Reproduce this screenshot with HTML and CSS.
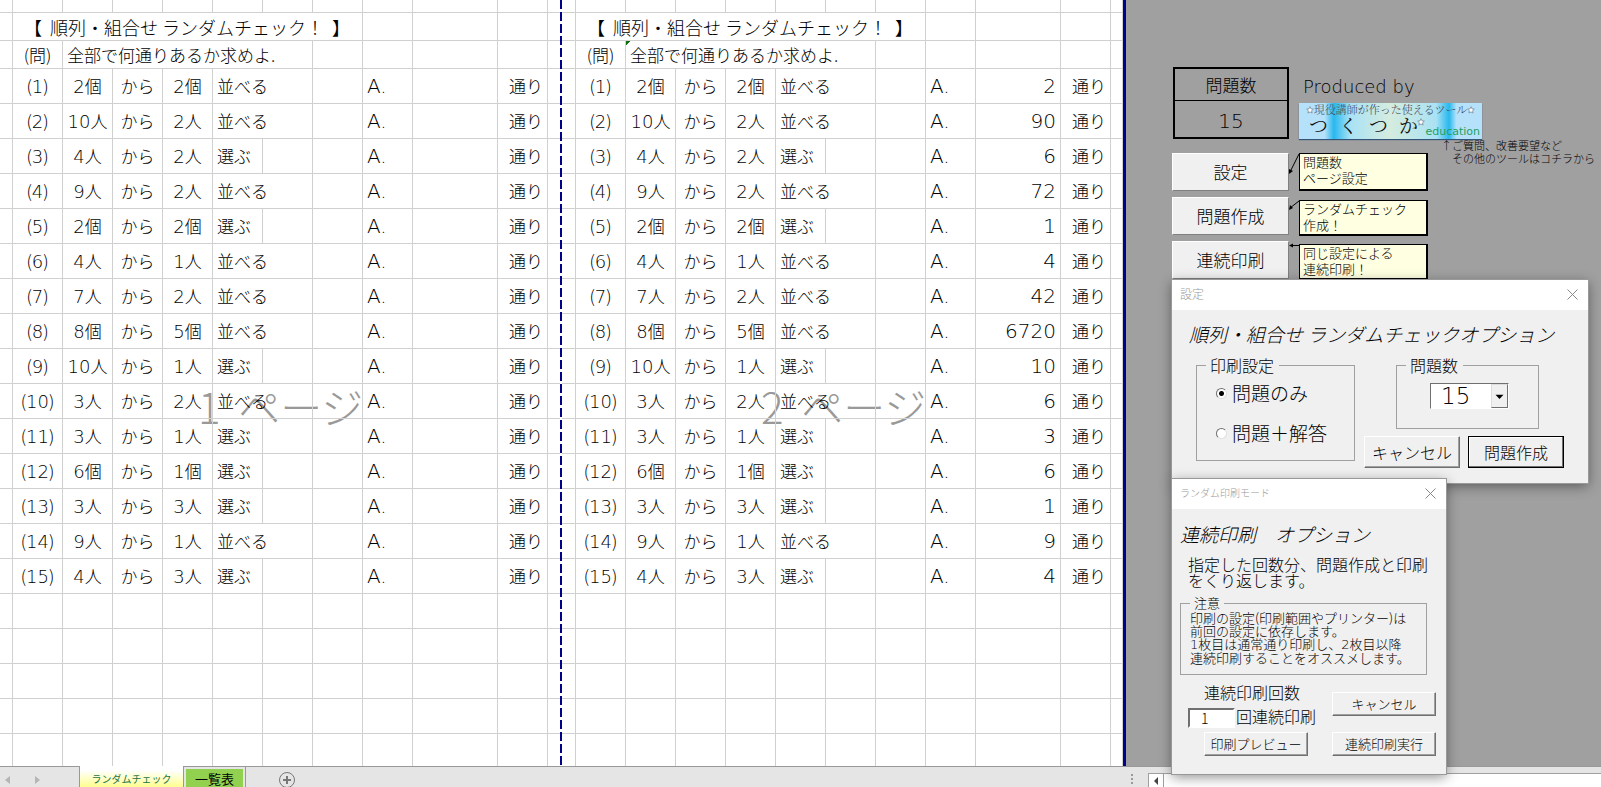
FILE: index.html
```html
<!DOCTYPE html>
<html lang="ja">
<head>
<meta charset="utf-8">
<title>順列・組合せ ランダムチェック</title>
<link rel="stylesheet" href="styles.css">
</head>
<body>
<main class="workspace">
  <section class="sheet">
    <div class="watermark watermark-1">1 &thinsp;ページ</div>
    <div class="watermark watermark-2">2 &thinsp;ページ</div>
    <table class="grid">
      <colgroup id="cols"></colgroup>
      <tbody id="rows"></tbody>
    </table>
    <div class="page-break"></div>
  </section>

  <aside class="side">
    <div class="side-top">
      <table class="count">
        <tr><th scope="col">問題数</th></tr>
        <tr><td class="num">15</td></tr>
      </table>
      <div class="brand">
        <div class="produced num">Produced by</div>
        <a class="banner" href="#">
          <span class="banner-top"><svg class="star" viewBox="0 0 12 12"><path d="M6 1l1.500 3.300 3.500.4-2.600 2.400.7 3.500L6 8.900 2.900 10.600l.7-3.500L1 4.700l3.500-.4z"/></svg>現役講師が作った使えるツール<svg class="star" viewBox="0 0 12 12"><path d="M6 1l1.500 3.300 3.500.4-2.600 2.400.7 3.500L6 8.900 2.900 10.600l.7-3.500L1 4.700l3.500-.4z"/></svg></span>
          <span class="banner-main"><b>つ</b><b>く</b><b>つ</b><b>か</b></span>
          <svg class="star star-big" viewBox="0 0 12 12"><path d="M6 1l1.500 3.300 3.500.4-2.600 2.400.7 3.500L6 8.900 2.900 10.600l.7-3.500L1 4.700l3.500-.4z"/></svg>
          <span class="banner-edu">education</span>
        </a>
      </div>
    </div>
    <div class="side-bottom">
      <div class="tools">
        <div class="tool"><button class="tool-btn">設定</button>
          <svg class="pointer" viewBox="0 0 10 38"><path class="line" d="M10 1L1 19"/><path d="M0 21l0-5 4 2z"/></svg>
          <p class="memo">問題数<br>ページ設定</p></div>
        <div class="tool"><button class="tool-btn">問題作成</button>
          <svg class="pointer" viewBox="0 0 10 38"><path class="line" d="M10 4L1 11"/><path d="M0 13l1-5 3 3z"/></svg>
          <p class="memo memo-low">ランダムチェック<br>作成！</p></div>
        <div class="tool"><button class="tool-btn">連続印刷</button>
          <svg class="pointer" viewBox="0 0 10 38"><path class="line" d="M10 4.500H1"/><path d="M0 4.500l4-2v4z"/></svg>
          <p class="memo memo-low">同じ設定による<br>連続印刷！</p></div>
      </div>
      <p class="side-note">↑ご質問、改善要望など<br>　その他のツールはコチラから</p>
    </div>
  </aside>

  <form class="dialog dialog-settings">
    <header class="dialog-bar"><span>設定</span>
      <button type="button" class="close" aria-label="閉じる"><svg viewBox="0 0 11 11"><path d="M.5.5l10 10M10.500.5l-10 10"/></svg></button></header>
    <div class="dialog-body">
      <h2>順列・組合せ ランダムチェックオプション</h2>
      <div class="settings">
        <fieldset class="print-set">
          <legend>印刷設定</legend>
          <label><input type="radio" name="mode" checked>問題のみ</label>
          <label><input type="radio" name="mode">問題＋解答</label>
        </fieldset>
        <div class="settings-right">
          <fieldset class="count-set">
            <legend>問題数</legend>
            <span class="select-box"><select class="num" aria-label="問題数"><option>15</option></select><svg viewBox="0 0 17 23"><path d="M4 10h9l-4.500 5z"/></svg></span>
          </fieldset>
          <div class="actions">
            <button type="button" class="btn btn-big">キャンセル</button>
            <button type="button" class="btn btn-big btn-default">問題作成</button>
          </div>
        </div>
      </div>
    </div>
  </form>

  <form class="dialog dialog-print">
    <header class="dialog-bar"><span class="small">ランダム印刷モード</span>
      <button type="button" class="close" aria-label="閉じる"><svg viewBox="0 0 11 11"><path d="M.5.5l10 10M10.500.5l-10 10"/></svg></button></header>
    <div class="dialog-body">
      <h2>連続印刷　オプション</h2>
      <p class="lead">指定した回数分、問題作成と印刷<br>をくり返します。</p>
      <fieldset class="notice">
        <legend>注意</legend>
        <p>印刷の設定(印刷範囲やプリンター)は<br>前回の設定に依存します。<br><span class="num">1</span>枚目は通常通り印刷し、<span class="num">2</span>枚目以降<br>連続印刷することをオススメします。</p>
      </fieldset>
      <div class="print-rows">
        <div class="print-left">
          <label class="times-label" for="times">連続印刷回数</label>
          <div class="times"><input id="times" type="text" value="1">回連続印刷</div>
          <button type="button" class="btn preview">印刷プレビュー</button>
        </div>
        <div class="print-right">
          <button type="button" class="btn">キャンセル</button>
          <button type="button" class="btn">連続印刷実行</button>
        </div>
      </div>
    </div>
  </form>
</main>

<footer class="bar">
  <div class="bar-nav">
    <svg viewBox="0 0 80 20"><path d="M10 9v8l-5-4zM35 9v8l5-4z"/></svg>
  </div>
  <a class="tab tab-active" href="#">ランダムチェック</a>
  <a class="tab tab-list" href="#"><span>一覧表</span></a>
  <button class="add" aria-label="シートを追加"><svg viewBox="0 0 18 18"><circle cx="9" cy="9" r="7.500"/><path class="plus" d="M9 5v8M5 9h8"/></svg></button>
  <div class="bar-scroll">
    <svg class="dots" viewBox="0 0 3 13"><path d="M0 1h2v2H0zM0 5h2v2H0zM0 9h2v2H0z"/></svg>
    <button class="scroll-left" aria-label="左へ"><svg viewBox="0 0 14 13"><path d="M9 3v8L5 7z"/></svg></button>
    <div class="scroll-track"></div>
  </div>
</footer>
<script src="sheet.js"></script>
</body>
</html>
```
FILE: styles.css
```css
* { box-sizing: border-box; }
body {
  margin: 0;
  height: 100vh;
  display: flex;
  flex-direction: column;
  overflow: hidden;
  background: #a0a0a0;
  color: #000;
  font: 300 17px/20px "Noto Sans CJK JP", sans-serif;
}
button, input, select { font: inherit; color: inherit; margin: 0; }
p, h2 { margin: 0; }
.num { font-family: "DejaVu Sans Light", "DejaVu Sans", sans-serif; font-weight: 200; }

.workspace { flex: 1; min-height: 0; display: flex; position: relative; z-index: 1; }

/* worksheet */
.sheet { position: relative; z-index: 0; overflow: hidden; background: #fff; border-right: 3px solid #00008b; flex: none; }
.grid { border-collapse: separate; border-spacing: 0; table-layout: fixed; width: 1123px; }
.grid td {
  height: 35px;
  padding: 0;
  border-right: 1px solid #d0d0d0;
  border-bottom: 1px solid #d0d0d0;
  text-align: center;
  white-space: nowrap;
  overflow: hidden;
}
.grid .r-top td { height: 13px; }
.grid .r-head td { height: 28px; }
.grid .left { text-align: left; padding-left: 4px; }
.grid .right { text-align: right; padding-right: 4px; }
.grid .title { text-align: left; padding-left: 11px; font-size: 18px; }
.grid .num { font-size: 18px; }
.grid .num-big { font-size: 20px; }
.grid .noted { background: linear-gradient(135deg, #107010 3px, transparent 3px); }
.watermark { position: absolute; z-index: -1; top: 376px; color: #999; font-size: 42px; line-height: 60px; }
.watermark-1 { left: 198px; }
.watermark-2 { left: 761px; }
.page-break {
  position: absolute; top: 0; bottom: 0; left: 560px; width: 2px;
  background: repeating-linear-gradient(#00008b 0 9px, #fff 9px 12px);
}

/* side panel */
.side { flex: 1; padding: 67px 0 0 47px; }
.side-top { display: flex; gap: 10px; }
.count { width: 116px; height: 72px; border: 2px solid #000; border-spacing: 0; flex: none; }
.count th, .count td { padding: 0; text-align: center; font-weight: 300; }
.count th { border-bottom: 1px solid #000; }
.count td { padding-top: 3px; font-weight: 200; font-size: 20px; }
.brand { display: flex; flex-direction: column; justify-content: space-between; }
.produced { padding: 10px 0 0 4px; font-size: 18px; }
.banner {
  position: relative; display: block; width: 183px; height: 36px; color: #445;
  text-decoration: none; font-family: "Liberation Serif", "Noto Serif CJK JP", "Noto Sans CJK JP", serif;
  background: linear-gradient(90deg, #b5e2fa 0 14%, #28b8ee 19%, #a9e2f5 28%, #d5ecdf 50%, #a9e2f5 75%, #28b8ee 82%, #b5e2fa 86%);
  box-shadow: 0 1px 1px #357;
}
.banner-top { display: flex; align-items: center; justify-content: center; font-size: 11px; line-height: 14px; white-space: nowrap; }
.banner-main { display: flex; gap: 11px; padding-left: 10px; font-size: 19px; line-height: 20px; color: #111; }
.banner-main b { font-weight: 400; }
.star { width: 8px; height: 8px; fill: #fff; stroke: #678; stroke-width: 1; }
.star-big { position: absolute; left: 118px; top: 15px; }
.banner-edu { position: absolute; right: 2px; bottom: 1px; color: #22a060; font: 11px/12px "DejaVu Sans", sans-serif; }
.side-bottom { display: flex; gap: 13px; margin-left: -1px; }
.tools { display: flex; flex-direction: column; gap: 6px; padding-top: 14px; }
.tool { display: flex; height: 38px; align-items: flex-start; }
.tool-btn { width: 117px; height: 38px; padding: 0; background: #f0f0f0; border: 1px solid; border-color: #fff #808080 #808080 #fff; }
.pointer { width: 10px; height: 38px; fill: #000; }
.pointer .line { stroke: #000; }
.memo { width: 129px; height: 38px; padding: 0 3px; background: #ffffe1; border: 1px solid #000; border-right-width: 2px; border-bottom-width: 2px; font-size: 13px; line-height: 16px; }
.memo-low { margin-top: 3px; height: 36px; }
.side-note { font-size: 11px; line-height: 13px; white-space: nowrap; }

/* dialogs */
.dialog { position: absolute; left: 1172px; background: #f0f0f0; box-shadow: 0 0 0 1px #999, 0 3px 12px rgba(0, 0, 0, .45); }
.dialog-settings { top: 280px; width: 416px; height: 203px; }
.dialog-print { top: 479px; width: 274px; height: 295px; }
.dialog-bar { display: flex; justify-content: space-between; align-items: center; height: 30px; padding: 0 10px 2px 8px; background: #fff; color: #999; font-size: 12px; }
.dialog-bar .small { font-size: 10px; }
.close { display: flex; padding: 0; border: 0; background: none; }
.close svg { width: 11px; height: 11px; stroke: #888; fill: none; }
.dialog h2 { font-size: 19px; line-height: 20px; font-weight: 300; font-style: italic; white-space: nowrap; }
.dialog fieldset { margin: 0; padding: 0; border: 1px solid #a0a0a0; min-width: 0; }
.dialog legend { margin-left: 9px; padding: 0 5px 0 4px; font-size: 16px; line-height: 16px; }
.dialog-settings .dialog-body { padding: 14px 24px 0; }
.dialog-settings h2 { margin-left: -7px; }
.settings { display: flex; justify-content: space-between; padding-top: 13px; }
.print-set { width: 159px; height: 104px; }
.print-set label { display: flex; align-items: center; gap: 5px; height: 40px; padding-left: 19px; font-size: 19px; }
.print-set input { appearance: none; width: 11px; height: 11px; border: 1px solid; border-color: #707070 #e0e0e0 #e0e0e0 #707070; border-radius: 50%; background: #fff; }
.print-set input:checked { background: radial-gradient(#000 0 2px, #fff 3px); }
.settings-right { display: flex; flex-direction: column; justify-content: space-between; height: 111px; }
.count-set { width: 143px; height: 72px; align-self: flex-start; }
.dialog .count-set { margin-left: 32px; }
.select-box { display: flex; width: 79px; height: 26px; margin: 10px 0 0 33px; background: #fff; border: 1px solid; border-color: #707070 #fff #fff #707070; }
.select-box select { appearance: none; flex: 1; min-width: 0; border: 0; background: none; padding: 0 0 0 10px; font-size: 23px; line-height: 24px; }
.select-box svg { width: 17px; height: 24px; background: #f0f0f0; border: 1px solid; border-color: #ddd #707070 #707070 #ddd; }
.actions { display: flex; gap: 8px; }
.btn { width: 104px; height: 24px; padding: 0; font-size: 13px; line-height: 16px; background: #f0f0f0; border: 1px solid; border-color: #fff #707070 #707070 #fff; box-shadow: inset -1px -1px #a0a0a0; }
.btn-big { width: 96px; height: 32px; font-size: 16px; }
.btn-default { border-color: #000; box-shadow: inset -1px -1px #707070, inset 1px 1px #fff; }
.dialog-print .dialog-body { padding: 15px 10px 0 8px; }
.lead { padding: 12px 0 0 8px; font-size: 16px; line-height: 16px; white-space: nowrap; }
.notice { height: 80px; }
.dialog .notice { margin: 7px 9px 0 0; }
.dialog .notice legend { font-size: 13px; padding: 0 4px; }
.notice p { padding-left: 9px; font-size: 13px; line-height: 13px; white-space: nowrap; }
.print-rows { display: flex; justify-content: space-between; padding-top: 9px; }
.print-left { display: flex; flex-direction: column; align-items: flex-start; padding-left: 8px; font-size: 16px; line-height: 16px; }
.times-label, .preview { margin-left: 16px; }
.times { display: flex; gap: 1px; padding: 8px 0 4px; }
.times input { width: 47px; height: 20px; padding: 0 11px; border: 2px solid; border-color: #707070 #fff #fff #707070; background: #fff; font-size: 14px; }
.print-right { display: flex; flex-direction: column; gap: 16px; padding-top: 8px; }

/* sheet tabs */
.bar { flex: none; display: flex; height: 21px; background: #e5e5e5; border-top: 1px solid #999; position: relative; }
.bar-nav { width: 80px; border-right: 1px solid #999; }
.bar-nav svg { width: 80px; height: 20px; fill: #b5b5b5; }
.tab { display: flex; align-items: center; justify-content: center; text-decoration: none; font-size: 13px; color: #000; }
.tab-active { width: 104px; margin-top: -1px; padding-top: 5px; background: linear-gradient(#fff 20%, #ffff90); border-right: 1px solid #999; color: #217346; font-size: 10px; font-weight: 400; }
.tab-list { width: 62px; padding: 2px 2px 0; border-right: 1px solid #999; }
.tab-list span { flex: 1; height: 18px; text-align: center; background: #92d050; font-weight: 400; }
.add { display: flex; margin: 4px 0 0 32px; padding: 0; border: 0; background: none; }
.add svg { width: 18px; height: 18px; fill: none; stroke: #777; }
.add .plus { stroke-width: 2; }
.bar-scroll { position: absolute; left: 1131px; right: 0; top: 6px; bottom: 0; display: flex; }
.dots { width: 3px; height: 13px; margin-right: 14px; fill: #999; }
.scroll-left { width: 16px; padding: 0; background: #fff; border: 1px solid #a0a0a0; border-bottom: 0; }
.scroll-left svg { display: block; width: 14px; height: 13px; fill: #444; }
.scroll-track { flex: 1; background: #fff; border-top: 1px solid #a0a0a0; }
```
FILE: sheet.js
```js
// Problem data: [count, unit, pick, verb, answer]
const problems = [
  [2, "個", 2, "並べる", 2], [10, "人", 2, "並べる", 90], [4, "人", 2, "選ぶ", 6],
  [9, "人", 2, "並べる", 72], [2, "個", 2, "選ぶ", 1], [4, "人", 1, "並べる", 4],
  [7, "人", 2, "並べる", 42], [8, "個", 5, "並べる", 6720], [10, "人", 1, "選ぶ", 10],
  [3, "人", 2, "並べる", 6], [3, "人", 1, "選ぶ", 3], [6, "個", 1, "選ぶ", 6],
  [3, "人", 3, "選ぶ", 1], [9, "人", 1, "並べる", 9], [4, "人", 3, "選ぶ", 4]
];
const block = [50, 50, 50, 50, 50, 50, 50, 50, 85, 50];
const widths = [13, ...block, 28, ...block, 12];
document.getElementById("cols").innerHTML =
  widths.map(w => `<col style="width:${w}px">`).join("");

const td = (text = "", cls = "", span = 1) => `<td class="${cls}" colspan="${span}">${text}</td>`;
const blank = n => td().repeat(n);
const num = n => `<span class="num">${n}</span>`;
const big = n => `<span class="num num-big">${n}</span>`;
const row = (make, cls = "") =>
  `<tr class="${cls}">${td()}${make(false)}${td()}${make(true)}${td()}</tr>`;

let html = row(() => blank(10), "r-top");
html += row(() => td("【&nbsp; 順列・組合せ ランダムチェック！&nbsp; 】", "title", 7) + blank(3), "r-head");
html += row(p2 => td("(問)") + td("全部で何通りあるか求めよ.", p2 ? "left noted" : "left", 5) + blank(4), "r-head");
problems.forEach(([n, unit, k, verb, answer], i) => {
  html += row(p2 =>
    td(`(${num(i + 1)})`) + td(num(n) + unit) + td("から") + td(num(k) + unit) +
    (verb === "並べる" ? td(verb, "left", 2) : td(verb, "left") + td()) + td() +
    td(big("A."), "left") + td(p2 ? big(answer) : "", "right") + td("通り", "right"));
});
for (let i = 0; i < 5; i++) html += row(() => blank(10));
document.getElementById("rows").innerHTML = html;
```
